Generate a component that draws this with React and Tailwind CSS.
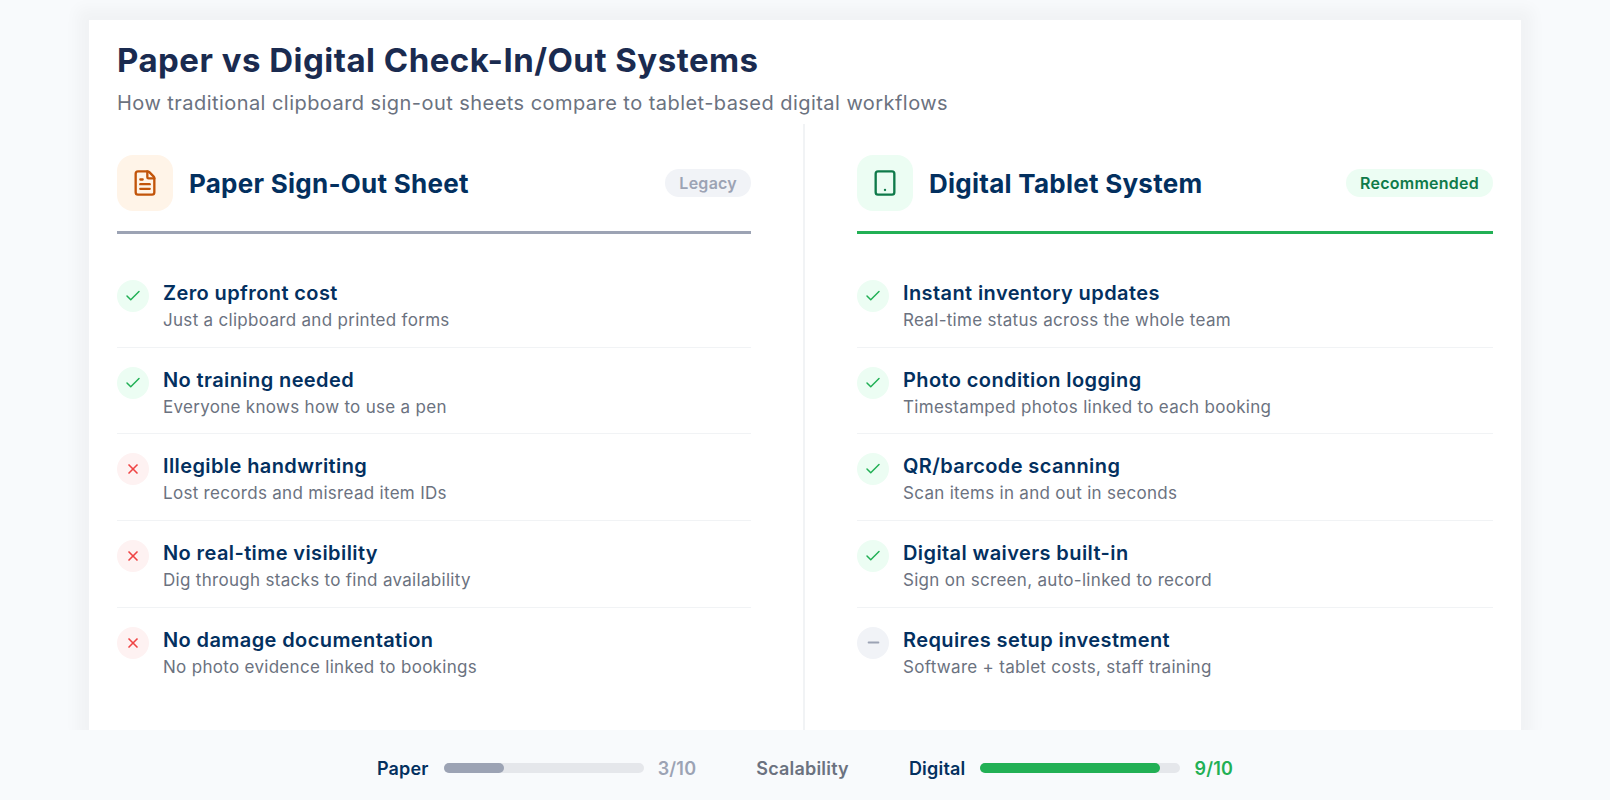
import { FileText, Tablet, Check, X, Minus } from "lucide-react";

const left = [
  ["y", "Zero upfront cost", "Just a clipboard and printed forms"],
  ["y", "No training needed", "Everyone knows how to use a pen"],
  ["n", "Illegible handwriting", "Lost records and misread item IDs"],
  ["n", "No real-time visibility", "Dig through stacks to find availability"],
  ["n", "No damage documentation", "No photo evidence linked to bookings"],
];
const right = [
  ["y", "Instant inventory updates", "Real-time status across the whole team"],
  ["y", "Photo condition logging", "Timestamped photos linked to each booking"],
  ["y", "QR/barcode scanning", "Scan items in and out in seconds"],
  ["y", "Digital waivers built-in", "Sign on screen, auto-linked to record"],
  ["m", "Requires setup investment", "Software + tablet costs, staff training"],
];

function Mark({ kind }) {
  if (kind === "y")
    return (
      <span className="flex h-8 w-8 shrink-0 items-center justify-center rounded-full bg-[#ecfdf3] text-[#22b055]">
        <Check size={18} strokeWidth={2} />
      </span>
    );
  if (kind === "n")
    return (
      <span className="flex h-8 w-8 shrink-0 items-center justify-center rounded-full bg-[#fef2f2] text-[#ef4444]">
        <X size={16} strokeWidth={2.5} />
      </span>
    );
  return (
    <span className="flex h-8 w-8 shrink-0 items-center justify-center rounded-full bg-[#f1f3f7] text-[#9ca3b4]">
      <Minus size={17} strokeWidth={2.5} />
    </span>
  );
}

function Row({ item, last }) {
  return (
    <div className={`flex h-[86.67px] items-start gap-[14px] pt-[19px] ${last ? "" : "border-b border-[#f1f3f5]"}`}>
      <Mark kind={item[0]} />
      <div className="-mt-[1px] flex flex-col">
        <div className="text-[20px] leading-[28px] font-semibold tracking-[0.4px] text-[#03305f]">{item[1]}</div>
        <div className="mt-[1px] text-[17px] leading-[24px] tracking-[0.3px] text-[#6b7280]">{item[2]}</div>
      </div>
    </div>
  );
}

function Column({ icon, iconBox, title, badge, badgeClass, lineClass, items, className }) {
  return (
    <div className={className}>
      <div className={`flex items-center border-b-[3px] pt-[31px] pb-[20px] ${lineClass}`}>
        <span className={`flex h-14 w-14 items-center justify-center rounded-2xl ${iconBox}`}>{icon}</span>
        <h2 className="ml-4 flex-1 pt-[2px] text-[26px] leading-[38px] font-bold tracking-[0.25px] text-[#03305f]">{title}</h2>
        <span className={`rounded-full px-[14px] py-[3px] text-[16px] leading-[22px] font-semibold tracking-[0.25px] ${badgeClass}`}>{badge}</span>
      </div>
      <div className="pt-[27px]">
        {items.map((it, i) => (
          <Row key={it[1]} item={it} last={i === items.length - 1} />
        ))}
      </div>
    </div>
  );
}

export default function App() {
  return (
    <div className="flex h-[800px] flex-col overflow-hidden bg-[#f8fafc] font-['Inter',sans-serif]">
      <div className="px-[89px] pt-5">
        <div className="flex h-[710px] flex-col bg-white px-7 shadow-[0_0_14px_12px_rgba(0,0,0,0.03)]">
          <div className="h-[104px] pt-[18px]">
            <h1 className="text-[33px] leading-[44px] font-bold tracking-[0.48px] text-[#1a2b50]">
              Paper vs Digital Check-In/Out Systems
            </h1>
            <p className="mt-[7px] text-[20px] leading-[28px] tracking-[0.45px] text-[#6b7280]">
              How traditional clipboard sign-out sheets compare to tablet-based digital workflows
            </p>
          </div>
          <div className="grid flex-1 grid-cols-2">
            <Column
              className="border-r-2 border-[#f1f3f5] pr-[52px]"
              icon={<FileText size={28} strokeWidth={2} className="text-[#c2540a]" />}
              iconBox="bg-[#fff4e8]"
              title="Paper Sign-Out Sheet"
              badge="Legacy"
              badgeClass="bg-[#f1f3f7] text-[#9ca3b4]"
              lineClass="border-[#9ca3b4]"
              items={left}
            />
            <Column
              className="pl-[52px]"
              icon={<Tablet size={28} strokeWidth={2} className="text-[#0f7a4a]" />}
              iconBox="bg-[#ecfdf3]"
              title="Digital Tablet System"
              badge="Recommended"
              badgeClass="bg-[#ecfdf3] text-[#0f7a4a]"
              lineClass="border-[#22b055]"
              items={right}
            />
          </div>
        </div>
      </div>
      <div className="relative z-10 flex flex-1 items-center justify-center bg-[#f8fafc] pt-[6px] text-[18px] font-semibold tracking-[0.2px]">
        <span className="text-[#03305f]">Paper</span>
        <div className="ml-[15px] h-2.5 w-[200px] rounded-full bg-[#e5e7eb]">
          <div className="h-2.5 w-[60px] rounded-full bg-[#9ca3b4]" />
        </div>
        <span className="ml-[14px] text-[#9ca3b4]">3/10</span>
        <span className="mx-[60px] text-[#6b7280]">Scalability</span>
        <span className="text-[#03305f]">Digital</span>
        <div className="ml-[15px] h-2.5 w-[200px] rounded-full bg-[#e5e7eb]">
          <div className="h-2.5 w-[180px] rounded-full bg-[#22b055]" />
        </div>
        <span className="ml-[14px] text-[#22b055]">9/10</span>
      </div>
    </div>
  );
}
